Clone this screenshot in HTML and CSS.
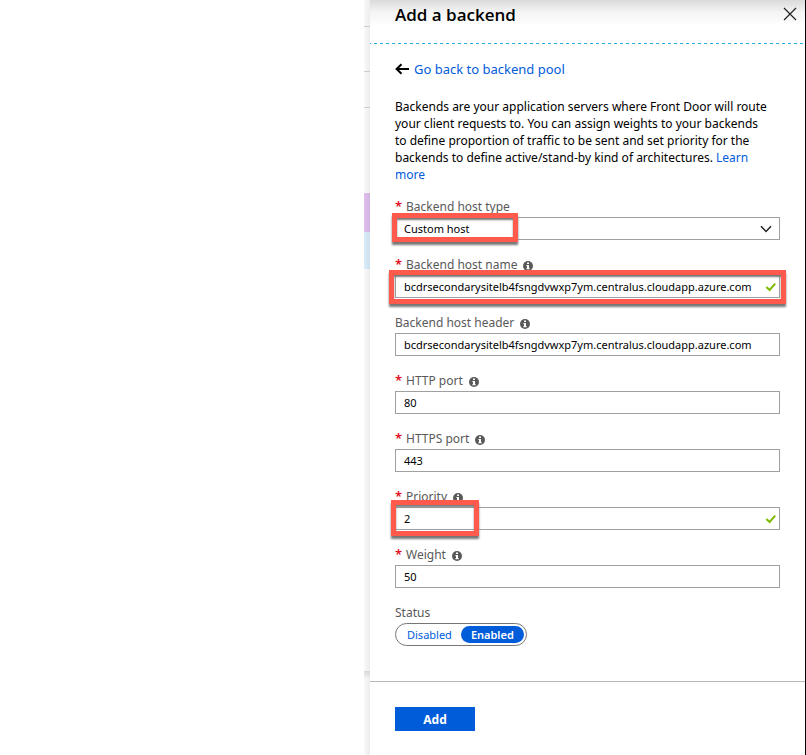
FILE: index.html
```html
<!DOCTYPE html>
<html lang="en">
<head>
<meta charset="utf-8">
<title>Add a backend</title>
<link rel="stylesheet" href="styles.css">
</head>
<body>
<svg class="symbols" aria-hidden="true">
  <symbol id="info" viewBox="0 0 10 10">
    <circle cx="5" cy="5" r="5" fill="#595959"/>
    <path d="M4 1.4h2v1.6H4zM3.4 4H6v3.2h.8v1.1H3.3V7.2H4V5h-.6z" fill="#fff"/>
  </symbol>
  <symbol id="check" viewBox="0 0 12 10">
    <path d="M1.4 5 4.6 8 10.2 1.6" fill="none" stroke="#7fba00" stroke-width="2"/>
  </symbol>
</svg>
<div class="page">
  <main class="backdrop"></main>
  <div class="edge" aria-hidden="true">
    <span class="row row-first"></span>
    <span class="row row-second"></span>
    <span class="row row-third"></span>
    <span class="row row-fourth"></span>
    <span class="row row-purple"></span>
    <span class="row row-blue"></span>
    <span class="row row-rest"></span>
    <span class="row row-base"></span>
  </div>
  <aside class="panel">
    <header class="panel-head">
      <h1>Add a backend</h1>
      <button class="close" type="button" aria-label="Close">
        <svg viewBox="0 0 14 14"><path d="M1 1 13 13M13 1 1 13" fill="none" stroke="#222" stroke-width="1.2"/></svg>
      </button>
      <svg class="dashes" aria-hidden="true"><path d="M0 .5H2000" stroke="#1fb0dc" stroke-dasharray="3 3" stroke-dashoffset="2"/></svg>
    </header>
    <form class="panel-body" id="backend">
      <div class="back">
        <svg viewBox="0 0 14 12" aria-hidden="true"><path d="M6.5 1.2 1.6 6l4.9 4.8M1.8 6H14" fill="none" stroke="#000" stroke-width="2"/></svg>
        <a href="#pool">Go back to backend pool</a>
      </div>
      <p class="intro">Backends are your application servers where Front Door will route your client requests to. You can assign weights to your backends to define proportion of traffic to be sent and set priority for the backends to define active/stand-by kind of architectures. <a href="#learn">Learn more</a></p>

      <div class="field">
        <div class="label"><span class="star">*</span><label for="type">Backend host type</label></div>
        <div class="control">
          <select id="type"><option>Custom host</option></select>
          <svg class="chevron" viewBox="0 0 12 8" aria-hidden="true"><path d="M1 1.2 6 6.4 11 1.2" fill="none" stroke="#222" stroke-width="1.5"/></svg>
          <span class="mark mark-type"></span>
        </div>
      </div>
      <div class="field">
        <div class="label"><span class="star">*</span><label for="name">Backend host name</label><svg class="info"><use href="#info"/></svg></div>
        <div class="control">
          <input id="name" type="text" value="bcdrsecondarysitelb4fsngdvwxp7ym.centralus.cloudapp.azure.com">
          <svg class="check"><use href="#check"/></svg>
          <span class="mark mark-name"></span>
        </div>
      </div>
      <div class="field">
        <div class="label"><label for="header">Backend host header</label><svg class="info"><use href="#info"/></svg></div>
        <div class="control"><input id="header" type="text" value="bcdrsecondarysitelb4fsngdvwxp7ym.centralus.cloudapp.azure.com"></div>
      </div>
      <div class="field">
        <div class="label"><span class="star">*</span><label for="http">HTTP port</label><svg class="info"><use href="#info"/></svg></div>
        <div class="control"><input id="http" type="text" value="80"></div>
      </div>
      <div class="field">
        <div class="label"><span class="star">*</span><label for="https">HTTPS port</label><svg class="info"><use href="#info"/></svg></div>
        <div class="control"><input id="https" type="text" value="443"></div>
      </div>
      <div class="field">
        <div class="label"><span class="star">*</span><label for="priority">Priority</label><svg class="info"><use href="#info"/></svg></div>
        <div class="control">
          <input id="priority" type="text" value="2">
          <svg class="check"><use href="#check"/></svg>
          <span class="mark mark-priority"></span>
        </div>
      </div>
      <div class="field">
        <div class="label"><span class="star">*</span><label for="weight">Weight</label><svg class="info"><use href="#info"/></svg></div>
        <div class="control"><input id="weight" type="text" value="50"></div>
      </div>
      <div class="field">
        <div class="label" id="status">Status</div>
        <div class="toggle" role="group" aria-labelledby="status">
          <button type="button" aria-pressed="false">Disabled</button>
          <button type="button" class="on" aria-pressed="true">Enabled</button>
        </div>
      </div>
    </form>
    <footer class="panel-foot">
      <button class="add" type="submit" form="backend">Add</button>
    </footer>
  </aside>
</div>
</body>
</html>
```
FILE: styles.css
```css
* { box-sizing: border-box; }

body {
  margin: 0;
  background: #fff;
  color: #000;
  font: 12px/17px "Noto Sans", "Open Sans", sans-serif;
}

button, input, select { font: inherit; color: inherit; }
a { color: #015cda; text-decoration: none; }
.symbols { position: absolute; width: 0; height: 0; }

.page { display: flex; min-height: 100vh; }
.backdrop { flex: 1; }

.edge {
  display: flex;
  flex-direction: column;
  width: 6px;
  background: linear-gradient(to right, #fafafa, #ececec);
}
.row { flex: none; border-bottom: 1px solid #ccc; }
.row-first { height: 27px; }
.row-second { height: 45px; }
.row-third { height: 36px; }
.row-fourth { height: 85px; border: 0; }
.row-purple { height: 39px; border: 0; background: linear-gradient(to right, #dfbfeb, #d3b3df); }
.row-blue { height: 37px; border: 0; background: linear-gradient(to right, #d9ecf9, #cbdfec); }
.row-rest { height: 402px; border: 0; }
.row-base { flex: 1; border: 0; background: linear-gradient(#d8d8d8, transparent 8px); }

.panel {
  display: flex;
  flex-direction: column;
  width: 436px;
  border-right: 1px solid #000;
  background: #fff;
}

.panel-head {
  display: flex;
  flex-wrap: wrap;
  align-items: center;
  justify-content: space-between;
  background: linear-gradient(#dadada, #f4f4f4 12px, #fff 26px);
}
h1 { margin: 0; padding: 4px 0 17px 25px; font-family: "Open Sans", sans-serif; font-size: 17px; line-height: 22px; font-weight: 600; }
.close { align-self: flex-start; margin: 7px 8px 0 0; padding: 0; border: 0; background: none; line-height: 0; }
.close svg { width: 14px; height: 14px; }
.dashes { flex: none; width: 100%; height: 1px; }

.panel-body { flex: none; padding: 16px 25px 35px; }
.back { display: flex; align-items: center; gap: 5px; font-size: 13px; line-height: 18px; }
.back svg { width: 14px; height: 12px; }
.intro { margin: 20px 0 15px; padding-right: 10px; }

.field { margin-bottom: 16px; }
.field:last-child { margin: 0; }
.label { display: flex; align-items: center; height: 17px; margin-bottom: 2px; color: #595959; }
.star { width: 11px; color: #e00b1c; font-size: 13px; font-weight: 600; }
.info { width: 10px; height: 10px; margin: 3px 0 0 6px; }

.control { position: relative; }
input, select {
  display: block;
  width: 100%;
  height: 23px;
  padding: 0 8px;
  border: 1px solid #a0a0a0;
  border-radius: 0;
  background: #fff;
  appearance: none;
  font-size: 11px;
  outline: 0;
}
.chevron { position: absolute; top: 8px; right: 8px; width: 12px; height: 8px; }
.check { position: absolute; top: 7px; right: 3px; width: 12px; height: 10px; }

.mark {
  position: absolute;
  border: 5px solid #ff5a4c;
  box-shadow: 0 3px 2px #777, inset 0 2px 2px #777;
  pointer-events: none;
}
.mark-type { top: -4px; left: -3px; width: 126px; height: 29px; }
.mark-name { top: -5px; left: -6px; right: -6px; height: 34px; }
.mark-priority { top: -7px; left: -4px; width: 88px; height: 36px; }

.toggle {
  display: inline-flex;
  height: 23px;
  padding: 2px;
  border: 1px solid #767676;
  border-radius: 12px;
}
.toggle button {
  padding: 0 9px;
  border: 0;
  border-radius: 9px;
  background: none;
  color: #015cda;
  font-size: 11px;
  line-height: 17px;
}
.toggle .on { padding: 0 10px; background: #015cda; color: #fff; font-weight: 600; }

.panel-foot { flex: 1; padding: 25px; border-top: 1px solid #b8b8b8; }
.add {
  width: 80px;
  height: 24px;
  padding: 0;
  border: 0;
  background: #015cda;
  color: #fff;
  font-weight: 700;
}
```
